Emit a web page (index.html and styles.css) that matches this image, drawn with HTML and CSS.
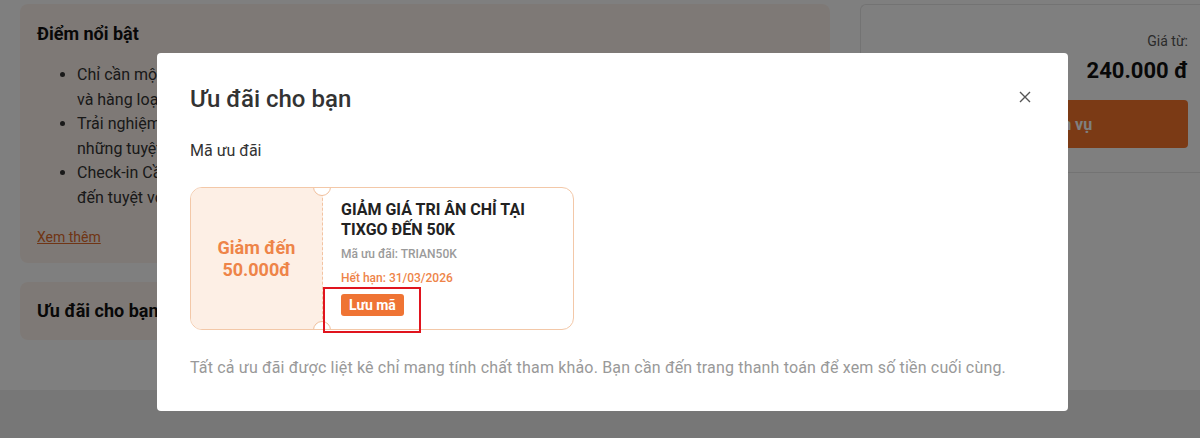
FILE: index.html
```html
<!DOCTYPE html>
<html lang="vi">
<head>
  <meta charset="UTF-8">
  <meta name="viewport" content="width=device-width, initial-scale=1.0">
  <title>Ưu đãi cho bạn</title>
  <link rel="stylesheet" href="styles.css">
</head>
<body>
  <main class="page" aria-hidden="true">
    <div class="col-left">
      <section class="card card-highlight">
        <h2>Điểm nổi bật</h2>
        <ul class="highlights">
          <li>Chỉ cần một tấm vé, bạn có thể thỏa sức khám phá khu vui chơi<br>và hàng loạt trò chơi hấp dẫn dành cho mọi lứa tuổi.</li>
          <li>Trải nghiệm không gian xanh mát cùng<br>những tuyệt tác kiến trúc độc đáo giữa lòng thành phố.</li>
          <li>Check-in Cầu Vàng và nhiều góc sống ảo<br>đến tuyệt vời cho những bức ảnh đáng nhớ.</li>
        </ul>
        <a href="#" class="more">Xem thêm</a>
      </section>
      <section class="card card-offer">
        <h2>Ưu đãi cho bạn</h2>
      </section>
    </div>

    <aside class="col-right">
      <div class="price-box">
        <p class="price-label">Giá từ:</p>
        <p class="price">240.000 đ</p>
        <button class="btn-book">Chọn gói dịch vụ</button>
      </div>
    </aside>
  </main>

  <footer class="site-footer"></footer>

  <div class="overlay">
    <div class="modal" role="dialog" aria-labelledby="modal-title">
      <div class="modal-head">
        <h3 id="modal-title">Ưu đãi cho bạn</h3>
        <button class="modal-close" aria-label="Đóng">
          <svg width="12" height="12" viewBox="0 0 12 12"><path d="M1 1L11 11M11 1L1 11" stroke="#555" stroke-width="1.4" fill="none"/></svg>
        </button>
      </div>

      <p class="section-label">Mã ưu đãi</p>

      <div class="coupon-wrap">
        <div class="coupon">
          <div class="coupon-value">Giảm đến<br>50.000đ</div>
          <div class="coupon-info">
            <p class="coupon-title">GIẢM GIÁ TRI ÂN CHỈ TẠI TIXGO ĐẾN 50K</p>
            <p class="coupon-code">Mã ưu đãi: TRIAN50K</p>
            <p class="coupon-exp">Hết hạn: 31/03/2026</p>
            <button class="btn-save">Lưu mã</button>
          </div>
          <span class="notch notch-top"></span>
          <span class="notch notch-bottom"></span>
        </div>
        <span class="mark"></span>
      </div>

      <p class="modal-note">Tất cả ưu đãi được liệt kê chỉ mang tính chất tham khảo. Bạn cần đến trang thanh toán để xem số tiền cuối cùng.</p>
    </div>
  </div>
</body>
</html>
```

FILE: styles.css
```css
html, body {
  margin: 0;
  padding: 0;
  font-family: Roboto, 'Noto Sans', sans-serif;
  color: #333;
  background: #fff;
  overflow: hidden;
}

p, h2, h3, ul {
  margin: 0;
}

.page {
  display: flex;
  gap: 30px;
  padding: 4px 0 50px 20px;
}

.col-left {
  width: 810px;
  display: flex;
  flex-direction: column;
  gap: 19px;
}

.card {
  background: #fdf3ed;
  border-radius: 8px;
  padding: 16px 17px;
}

.card-highlight {
  padding-top: 17px;
}

.card h2 {
  font-size: 18px;
  line-height: 26px;
  font-weight: 700;
  color: #111;
}

.highlights {
  margin-top: 16px;
  padding-left: 40px;
  font-size: 16px;
  line-height: 24.5px;
}

.more {
  display: inline-block;
  margin-top: 17px;
  font-size: 14px;
  line-height: 20px;
  color: #e06a2a;
}

.col-right {
  width: 340px;
}

.price-box {
  border: 1px solid #e6e6e6;
  border-right: none;
  border-radius: 6px 0 0 6px;
  padding: 26px 12px 24px 16px;
  text-align: right;
}

.price-label {
  font-size: 14px;
  line-height: 20px;
  color: #555;
}

.price {
  margin-top: 6px;
  font-size: 22px;
  line-height: 28px;
  font-weight: 700;
  color: #111;
}

.btn-book {
  display: block;
  width: 100%;
  height: 48px;
  margin-top: 15px;
  border: none;
  border-radius: 4px;
  background: #f6742a;
  color: #fff;
  font-family: inherit;
  font-size: 16px;
  font-weight: 700;
}

.site-footer {
  height: 60px;
  background: #efefef;
}

/* hộp thoại ưu đãi */
.overlay {
  position: fixed;
  inset: 0;
  background: rgba(0, 0, 0, 0.5);
  padding: 53px 0 0 157px;
}

.modal {
  width: 911px;
  box-sizing: border-box;
  background: #fff;
  border-radius: 4px;
  padding: 30px 33px 32px;
}

.modal-head {
  display: flex;
  justify-content: space-between;
  align-items: center;
}

.modal-head h3 {
  font-size: 24px;
  line-height: 32px;
  font-weight: 500;
  color: #333;
}

.modal-close {
  width: 24px;
  height: 24px;
  margin-right: -2px;
  margin-top: -4px;
  padding: 0;
  border: none;
  background: none;
  display: flex;
  align-items: center;
  justify-content: center;
}

.section-label {
  margin-top: 24px;
  font-size: 16px;
  line-height: 24px;
  color: #333;
}

.coupon-wrap {
  position: relative;
  width: 384px;
  margin-top: 24px;
}

.coupon {
  position: relative;
  display: flex;
  height: 143px;
  box-sizing: border-box;
  border: 1px solid #f3c8a8;
  border-radius: 12px;
  overflow: hidden;
}

.coupon-value {
  width: 131px;
  flex-shrink: 0;
  display: flex;
  align-items: center;
  justify-content: center;
  text-align: center;
  background: #fdefe5;
  border-right: 1px dashed #f3c3a1;
  color: #ee8448;
  font-size: 18px;
  line-height: 22px;
  font-weight: 700;
}

.coupon-info {
  padding: 12px 18px 0 18px;
}

.coupon-title {
  font-size: 16px;
  line-height: 20px;
  font-weight: 700;
  color: #222;
}

.coupon-code {
  margin-top: 6px;
  font-size: 12px;
  line-height: 16px;
  font-weight: 500;
  color: #9a9a9a;
}

.coupon-exp {
  margin-top: 8px;
  font-size: 12px;
  line-height: 16px;
  font-weight: 500;
  color: #ee8448;
}

.btn-save {
  margin-top: 8px;
  height: 22px;
  padding: 0 8px;
  border: none;
  border-radius: 3px;
  background: #ef7434;
  color: #fff;
  font-family: inherit;
  font-size: 14px;
  font-weight: 700;
}

.notch {
  position: absolute;
  left: 122px;
  width: 18px;
  height: 18px;
  box-sizing: border-box;
  border: 1px solid #f0bf9c;
  border-radius: 50%;
  background: #fff;
}

.notch-top {
  top: -10px;
}

.notch-bottom {
  bottom: -10px;
}

/* khung đỏ đánh dấu */
.mark {
  position: absolute;
  left: 133px;
  top: 100px;
  width: 98px;
  height: 46px;
  box-sizing: border-box;
  border: 2px solid #e0141e;
}

.modal-note {
  margin-top: 27px;
  font-size: 16px;
  line-height: 22px;
  letter-spacing: 0.17px;
  color: #999;
}
```
